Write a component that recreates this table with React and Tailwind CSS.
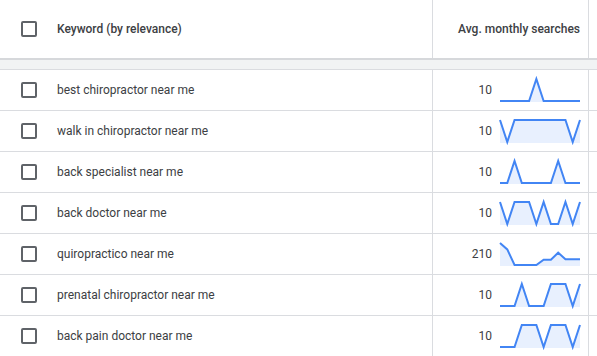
import React from 'react';

const rows = [
  { keyword: 'best chiropractor near me', volume: '10', trend: [0, 0, 0, 0, 0, 1, 0, 0, 0, 0, 0, 0] },
  { keyword: 'walk in chiropractor near me', volume: '10', trend: [1, 0, 1, 1, 1, 1, 1, 1, 1, 1, 0, 1] },
  { keyword: 'back specialist near me', volume: '10', trend: [0, 0, 1, 0, 0, 0, 0, 0, 1, 0, 0, 0] },
  { keyword: 'back doctor near me', volume: '10', trend: [1, 0, 1, 1, 1, 0, 1, 0, 0, 1, 0, 1] },
  { keyword: 'quiropractico near me', volume: '210', trend: [1, 0.71, 0, 0, 0, 0, 0.24, 0.24, 0.56, 0.26, 0.26, 0.26] },
  { keyword: 'prenatal chiropractor near me', volume: '10', trend: [0, 0, 0, 1, 0, 0, 0, 1, 1, 1, 0, 1] },
  { keyword: 'back pain doctor near me', volume: '10', trend: [0, 0, 0, 1, 1, 1, 0, 1, 1, 1, 0, 1] },
];

const Checkbox = () => (
  <div className="w-[16px] h-[16px] border-2 border-[#5f6368] rounded-[2px] shrink-0" />
);

const Sparkline = ({ data }) => {
  const w = 80;
  const h = 24;
  const step = w / (data.length - 1);
  const pts = data.map((v, i) => [i * step, 1 + (1 - v) * 22]);
  const line = pts.map(([x, y]) => `${x.toFixed(2)},${y.toFixed(2)}`).join(' ');
  const area = `0,${h} ${line} ${w},${h}`;

  return (
    <svg width={w} height={h} viewBox={`0 0 ${w} ${h}`} className="shrink-0 overflow-visible">
      <polygon points={area} fill="#e8f0fe" />
      <polyline points={line} fill="none" stroke="#4285f4" strokeWidth="2" strokeLinejoin="miter" />
    </svg>
  );
};

const App = () => {
  return (
    <div className="w-[597px] h-[356px] overflow-hidden bg-white text-[#3c4043] font-['Roboto',sans-serif]">
      {/* Header */}
      <div className="flex h-[58px]">
        <div className="w-[433px] border-r border-[#dadce0] flex items-center gap-[20px] pl-[21px]">
          <Checkbox />
          <span className="text-[12px] font-medium">Keyword (by relevance)</span>
        </div>
        <div className="w-[156px] border-r border-[#dadce0] flex items-center justify-end pr-[8px]">
          <span className="text-[12px] font-medium">Avg. monthly searches</span>
        </div>
        <div className="flex-1" />
      </div>

      {/* Divider band */}
      <div className="h-[12px] border-t-2 border-t-[#d6d8db] border-b border-b-[#dadce0] bg-[#f1f3f4]" />

      {/* Rows */}
      {rows.map((row) => (
        <div key={row.keyword} className="flex h-[41px] border-b border-[#dadce0]">
          <div className="w-[433px] border-r border-[#dadce0] flex items-center gap-[20px] pl-[21px]">
            <Checkbox />
            <span className="text-[12px]">{row.keyword}</span>
          </div>
          <div className="w-[156px] border-r border-[#dadce0] flex items-center justify-end gap-[8px] pr-[8px]">
            <span className="text-[12px]">{row.volume}</span>
            <Sparkline data={row.trend} />
          </div>
          <div className="flex-1" />
        </div>
      ))}
    </div>
  );
};

export default App;
